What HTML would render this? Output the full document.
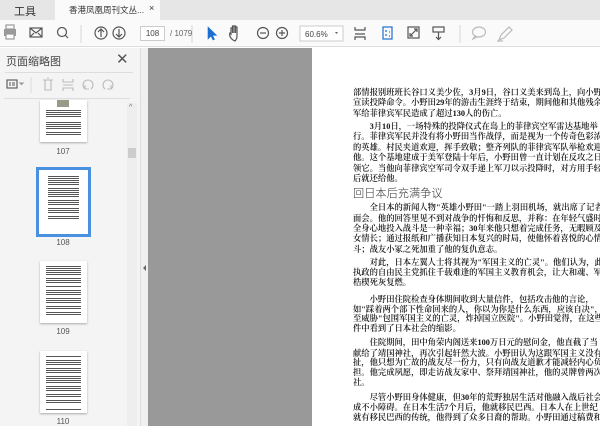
<!DOCTYPE html><html><head><meta charset="utf-8"><style>
*{margin:0;padding:0;box-sizing:border-box}
body{width:600px;height:426px;overflow:hidden;position:relative;background:#fff;font-family:"Liberation Sans","Noto Sans CJK SC",sans-serif;color:#333}
.a{position:absolute}
.tabbar{left:0;top:0;width:600px;height:20px;background:#e6e6e6}
.tb{left:0;top:20px;width:600px;height:27px;background:#fafafa;border-bottom:1px solid #ddd}
.l{white-space:nowrap;font-family:"Liberation Serif","Noto Serif CJK SC",serif;font-size:8.3px;color:#111;left:353px;line-height:10px;font-weight:600}
.th{position:absolute;background:#fff;box-shadow:0 1px 2px #aaa}
.th i{position:absolute;left:6px;right:6px;height:1px;background:#555}
.lb{position:absolute;font-size:8px;color:#555;width:60px;text-align:center}
</style></head><body>
<div class="a tabbar"></div>
<div class="a" style="left:14px;top:3px;font-size:11px;color:#333">工具</div>
<div class="a" style="left:55px;top:0;width:105px;height:20px;background:#fafafa"></div>
<div class="a" style="left:69px;top:4px;font-size:8.5px;color:#333">香港凤凰周刊文丛...</div>
<div class="a" style="left:149px;top:3px;font-size:9px;color:#333">×</div>
<div class="a tb"></div>
<svg class="a" style="left:0;top:20px" width="600" height="27" viewBox="0 0 600 27" fill="none" stroke="#555" stroke-width="1.2">
<rect x="4" y="9" width="12" height="7" fill="#999" stroke="none"/><rect x="6" y="5" width="8" height="4" stroke="#999"/><rect x="6" y="14" width="8" height="5" fill="#fff" stroke="#999"/>
<rect x="30" y="8" width="12" height="9"/><path d="M30 8l6 5 6-5M30 17l4-4M42 17l-4-4"/>
<circle cx="62" cy="12" r="4.5"/><path d="M65 15l3 3"/>
<path d="M81 5v18" stroke="#ddd"/>
<circle cx="101" cy="13" r="6"/><path d="M101 17v-8M98 12l3-3 3 3"/>
<circle cx="119" cy="13" r="6"/><path d="M119 9v8M116 14l3 3 3-3"/>
<path d="M192 5v18" stroke="#ddd"/>
<path d="M208 7v12l3-3 2 4 1.5-.7-2-4h4z" fill="#1c6fd0" stroke="#1c6fd0" stroke-width=".6"/>
<path d="M233 20c-3-2-4-5-3-7l1 1v-6h1.5v5-7h1.5v7-7h1.5v7-6h1.5v9c0 3-1 4-2 5z"/>
<circle cx="263" cy="13" r="5.5"/><path d="M260 13h6"/>
<circle cx="282" cy="13" r="5.5"/><path d="M279 13h6M282 10v6"/>
<rect x="300" y="6" width="43" height="15" fill="#fff" stroke="#ccc" stroke-width="1"/>
<path d="M335 12l1.5 2 1.5-2z" fill="#666" stroke="none"/>
<path d="M355 7v3h10V7M355 20v-3h10v3M355 14h10"/>
<rect x="383" y="7" width="9" height="12" stroke="#1c6fd0"/><path d="M385 11h2M389 12h1M385 15h2M389 16h1" stroke="#1c6fd0"/>
<rect x="408" y="7" width="11" height="11"/><path d="M410 16l7-7M414 9h3v3M410 13v3h3"/>
<rect x="433" y="7" width="11" height="5"/><path d="M438.5 12v7M436 17l2.5 2.5 2.5-2.5"/>
<path d="M460 5v18" stroke="#ddd"/>
<ellipse cx="479" cy="12" rx="6.5" ry="5" stroke="#bbb"/><path d="M475 16l-2 3 4-2" stroke="#bbb"/>
<path d="M499 20l2-5 8-8 3 3-8 8zM497 21h6" stroke="#bbb"/>
</svg>
<div class="a" style="left:305px;top:30px;font-size:8px;color:#444">60.6%</div>
<div class="a" style="left:140px;top:26px;width:25px;height:15px;border:1px solid #ccc;background:#fff;font-size:8px;text-align:center;line-height:13px;color:#444">108</div>
<div class="a" style="left:170px;top:29px;font-size:8px;color:#666">/ 1079</div>
<div class="a" style="left:0;top:48px;width:140px;height:378px;background:#f4f4f4"></div>
<div class="a" style="left:140px;top:48px;width:8px;height:378px;background:#f0f0f0;border-left:1px solid #ddd"></div>
<div class="a" style="left:143px;top:265px;width:0;height:0;border-top:3px solid transparent;border-bottom:3px solid transparent;border-right:3px solid #666"></div>
<div class="a" style="left:6px;top:53px;font-size:11px;color:#444">页面缩略图</div>
<div class="a" style="left:116px;top:50px;font-size:15px;color:#555">✕</div>
<div class="a" style="left:5px;top:72px;width:128px;height:1px;background:#ddd"></div>
<svg class="a" style="left:0;top:74px" width="130" height="24" fill="none" stroke="#999" stroke-width="1.1">
<rect x="7" y="6" width="10" height="8" stroke="#555"/><path d="M9 9h2M9 11h2M12 9h3M12 11h3" stroke="#555"/><path d="M20 9l1.5 1.5 1.5-1.5z" fill="#555"/>
<path d="M31 3v16" stroke="#ddd"/>
<path d="M43 6h10M45 6v10h6V6M47 4h2" stroke="#bbb"/>
<path d="M63 5v3h10V5M63 17v-3h10v3M63 11h10" stroke="#bbb"/>
<path d="M85 15a5 5 0 1 1 6 0M85 11v4h4" stroke="#bbb"/>
<path d="M111 15a5 5 0 1 0 -6 0M111 11v4h-4" stroke="#bbb"/>
</svg>
<div class="a" style="left:4px;top:98px;width:126px;height:1px;background:#ddd"></div>
<div class="a" style="left:127px;top:103px;width:10px;height:323px;background:#eee"></div>
<div class="a" style="left:128px;top:148px;width:8px;height:10px;background:#ccc"></div>
<div class="a" style="left:129px;top:104px;font-size:7px;color:#666">^</div>
<div class="th" style="left:40px;top:100px;width:47px;height:42px"><i style="top:10px"></i><i style="top:12px"></i><i style="top:14px"></i><i style="top:16px"></i><i style="top:22px"></i><i style="top:24px"></i><i style="top:26px"></i><i style="top:28px"></i><i style="top:32px"></i><i style="top:34px"></i><div style="position:absolute;left:17px;top:0;width:12px;height:7px;background:#998"></div></div>
<div class="lb" style="left:33px;top:147px">107</div>
<div class="a" style="left:36px;top:167px;width:55px;height:70px;border:3px solid #4a90e0;background:#fff"></div>
<div class="th" style="left:42px;top:172px;width:43px;height:58px;box-shadow:none"><i style="top:4px"></i><i style="top:6px"></i><i style="top:8px"></i><i style="top:10px"></i><i style="top:12px"></i><i style="top:16px"></i><i style="top:18px"></i><i style="top:20px"></i><i style="top:22px"></i><i style="top:24px"></i><i style="top:28px"></i><i style="top:30px"></i><i style="top:32px"></i><i style="top:36px"></i><i style="top:38px"></i><i style="top:40px"></i><i style="top:44px"></i><i style="top:46px"></i></div>
<div class="lb" style="left:33px;top:238px">108</div>
<div class="th" style="left:40px;top:261px;width:47px;height:62px"><i style="top:5px"></i><i style="top:7px"></i><i style="top:9px"></i><i style="top:11px"></i><i style="top:13px"></i><i style="top:17px"></i><i style="top:19px"></i><i style="top:21px"></i><i style="top:25px"></i><i style="top:29px"></i><i style="top:31px"></i><i style="top:33px"></i><i style="top:37px"></i><i style="top:39px"></i><i style="top:41px"></i><i style="top:45px"></i><i style="top:47px"></i><i style="top:51px"></i><i style="top:53px"></i></div>
<div class="lb" style="left:33px;top:327px">109</div>
<div class="th" style="left:40px;top:351px;width:47px;height:62px"><i style="top:5px"></i><i style="top:9px"></i><i style="top:11px"></i><i style="top:13px"></i><i style="top:17px"></i><i style="top:19px"></i><i style="top:21px"></i><i style="top:25px"></i><i style="top:27px"></i><i style="top:29px"></i><i style="top:31px"></i><i style="top:35px"></i><i style="top:37px"></i><i style="top:39px"></i><i style="top:43px"></i><i style="top:45px"></i><i style="top:49px"></i><i style="top:51px"></i><i style="top:58px"></i></div>
<div class="lb" style="left:33px;top:417px">110</div>
<div class="a" style="left:148px;top:48px;width:164px;height:378px;background:#999"></div>
<div class="a" style="left:312px;top:48px;width:288px;height:378px;background:#fff"></div>
<div class="a" style="left:0;top:0;width:600px;height:426px;overflow:hidden">
<div class="a l" style="top:88px">部情报别班班长谷口义美少佐，3月9日，谷口义美来到岛上，向小野田</div>
<div class="a l" style="top:98px">宣读投降命令。小野田29年的游击生涯终于结束，期间他和其他残余日</div>
<div class="a l" style="top:109px">军给菲律宾军民造成了超过130人的伤亡。</div>
<div class="a l" style="top:122px">　　3月10日，一场特殊的投降仪式在岛上的菲律宾空军雷达基地举</div>
<div class="a l" style="top:132px">行。菲律宾军民并没有将小野田当作战俘，而是视为一个传奇色彩浓厚</div>
<div class="a l" style="top:143px">的英雄。村民夹道欢迎，挥手致敬；整齐列队的菲律宾军队举枪欢迎</div>
<div class="a l" style="top:153px">他。这个基地建成于美军登陆十年后，小野田曾一直计划在反攻之日占</div>
<div class="a l" style="top:164px">领它。当他向菲律宾空军司令双手递上军刀以示投降时，对方用手轻抚</div>
<div class="a l" style="top:174px">后就还给他。</div>
<div class="a l" style="top:186px;font-size:11.2px;line-height:14px;font-family:'Noto Sans CJK SC',sans-serif;font-weight:300;color:#333">回日本后充满争议</div>
<div class="a l" style="top:203px">　　全日本的新闻人物"英雄小野田"一踏上羽田机场，就出席了记者</div>
<div class="a l" style="top:214px">面会。他的回答里见不到对战争的忏悔和反思，并称：在年轻气盛时</div>
<div class="a l" style="top:224px">全身心地投入战斗是一种幸福；30年来他只想着完成任务，无暇顾及儿</div>
<div class="a l" style="top:234px">女情长；通过报纸和广播获知日本复兴的时局，使他怀着喜悦的心情</div>
<div class="a l" style="top:245px">斗；战友小冢之死加重了他的复仇意志。</div>
<div class="a l" style="top:258px">　　对此，日本左翼人士将其视为"军国主义的亡灵"。他们认为，此</div>
<div class="a l" style="top:268px">执政的自由民主党抓住千载难逢的军国主义教育机会，让大和魂、军</div>
<div class="a l" style="top:278px">梏楔死灰复燃。</div>
<div class="a l" style="top:295px">　　小野田住院检查身体期间收到大量信件，包括攻击他的言论，</div>
<div class="a l" style="top:305px">如"踩着两个部下性命回来的人，你以为你是什么东西，应该自决"，</div>
<div class="a l" style="top:314px">至威胁"包围军国主义的亡灵，炸掉国立医院"。小野田觉得，在这些</div>
<div class="a l" style="top:324px">件中看到了日本社会的缩影。</div>
<div class="a l" style="top:338px">　　住院期间，田中角荣内阁送来100万日元的慰问金，他直截了当</div>
<div class="a l" style="top:349px">献给了靖国神社，再次引起轩然大波。小野田认为这跟军国主义没有</div>
<div class="a l" style="top:358px">扯，他只想为亡故的战友尽一份力，只有向战友道歉才能减轻内心负</div>
<div class="a l" style="top:368px">担。他完成夙愿，即走访战友家中、祭拜靖国神社，他的灵牌曾两次</div>
<div class="a l" style="top:378px">社。</div>
<div class="a l" style="top:393px">　　尽管小野田身体健康，但30年的荒野独居生活对他融入战后社会</div>
<div class="a l" style="top:403px">成不小障碍。在日本生活7个月后，他就移民巴西。日本人在上世纪</div>
<div class="a l" style="top:413px">就有移民巴西的传统，他得到了众多日裔的帮助。小野田通过稿费和</div>
</div>
</body></html>
